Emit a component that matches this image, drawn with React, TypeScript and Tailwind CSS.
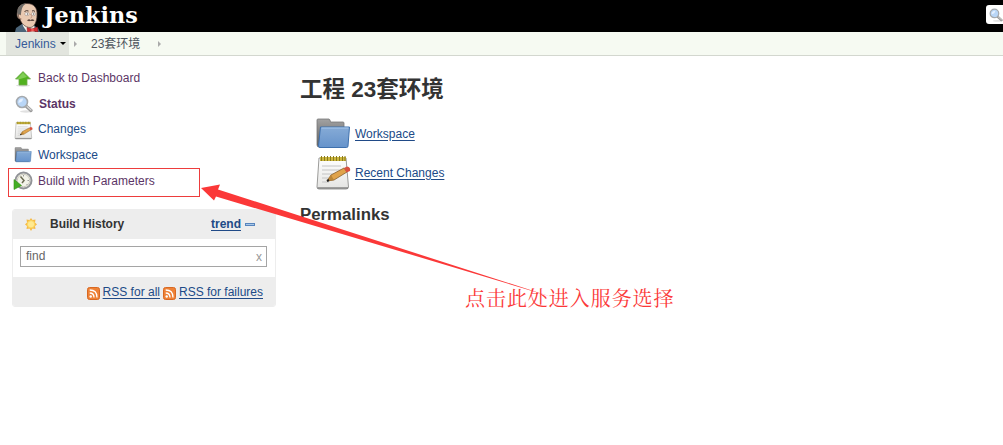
import type { ReactNode } from "react";

type IconProps = { className?: string };

function Butler() {
  return (
    <svg className="h-8 w-[30px] shrink-0" viewBox="0 0 30 32">
      <path d="M0 32 L1 28 L7 24 L18 25 L23 28 L25 32Z" fill="#4b6478" />
      <path d="M7 21 L8 26 L12 32 L20 32 L19 24Z" fill="#f4f1e9" />
      <path d="M2.500 12 C2.500 6 7 3.500 12 3.500 C19 3.500 22.500 8 22 15 C22 22 19 27.500 15 27.500 C10 27.500 6 23 5 19 C2 19 1.500 14 2.500 12Z" fill="#e9c9b1" stroke="#4b3a34" strokeWidth=".7" />
      <path d="M2.500 14 C1.500 8 5 4 11 3.600 C7 6 6.500 10 6 14 L5 18 L3.500 18Z" fill="#6d6a66" />
      <path d="M6 15 q-3 -2 -2.500 1 q0 3 3 3" fill="#e9c9b1" stroke="#79513f" strokeWidth=".6" />
      <ellipse cx="12" cy="14" rx="2.200" ry="1.700" fill="#fff" stroke="#8d7a6e" strokeWidth=".5" />
      <ellipse cx="18.500" cy="14" rx="1.900" ry="1.700" fill="#fff" stroke="#8d7a6e" strokeWidth=".5" />
      <path d="M11.800 14h1.200M18 14h1.200M9.500 11.500q2-1.500 4-.5M17 11q2-1 3 .5" fill="none" stroke="#43352f" />
      <path d="M12 20.500 q2-2 3.500-.5 q2-1.500 4 .5 q-2 1-4 .3 q-1.500 1-3.500-.3Z" fill="#5f4a42" />
      <path d="M15.500 14 q2.500 3.500 0 4" fill="none" stroke="#bb8973" strokeWidth=".8" />
      <path d="M12 27.500 L17 29 L22.500 27 L23 32 L17.500 31 L12.500 32Z" fill="#d22c30" stroke="#7b1719" strokeWidth=".5" />
      <circle cx="17.500" cy="30" r="1.400" fill="#ef5c58" />
    </svg>
  );
}

function UpArrow({ className }: IconProps) {
  return (
    <svg className={className} viewBox="0 0 18 18">
      <ellipse cx="9" cy="16.500" rx="7" ry="1.200" fill="#ddd" />
      <path d="M9 2.500 L16.500 10 H13 V16 H5 V10 H1.500Z" fill="#51b11f" stroke="#71aa4f" strokeWidth=".8" />
      <path d="M9 3.500 L13 8 L6 10 H3Z" fill="#80ce55" />
    </svg>
  );
}

function Magnifier({ className }: IconProps) {
  return (
    <svg className={className} viewBox="0 0 18 18">
      <ellipse cx="11" cy="16.500" rx="6" ry="1.200" fill="#e1e1e1" />
      <path d="M11 11 L16 15.500" stroke="#999" strokeWidth="3.200" strokeLinecap="round" />
      <path d="M12 11.500 L16 15" stroke="#d8d8d8" strokeWidth="1.200" strokeLinecap="round" />
      <circle cx="7" cy="7" r="5.500" fill="#b9d6f7" stroke="#a5a9ad" strokeWidth="1.600" />
      <path d="M3.500 7 Q4 3.500 8 3.500 Q8 7 3.500 8Z" fill="#e4f0ff" />
    </svg>
  );
}

function Notepad({ className }: IconProps) {
  return (
    <svg className={className} viewBox="0 0 36 36">
      <defs>
        <linearGradient id="paper" x1="0" y1="0" x2="0" y2="1">
          <stop offset="0" stopColor="#fff" />
          <stop offset="1" stopColor="#e4e4e2" />
        </linearGradient>
      </defs>
      <path d="M4 3 H31 L33.500 32 Q33.500 34 31 34 H4 Q2 34 2 32Z" fill="url(#paper)" stroke="#9b9b99" />
      <path d="M2.500 33 H33" stroke="#777" strokeWidth="1.300" />
      <path d="M5 4 H31" stroke="#cdb83c" strokeWidth="4" />
      <path d="M6.500 1v5M9.500 1v5M12.500 1v5M15.500 1v5M18.500 1v5M21.500 1v5M24.500 1v5M27.500 1v5M30 1v5" stroke="#8a7a20" strokeWidth="1" />
      <path d="M7 11h19M7 15h20M7 19h16M7 23h10M7 27h7" stroke="#c4c4c4" />
      <path d="M12 26 L16 20 L29 13 L32 17 L19 25Z" fill="#e0a34b" stroke="#86602e" strokeWidth=".8" />
      <path d="M12 26 L16 20 L19 25Z" fill="#b98538" />
      <path d="M29 13 L32 11.500 Q36 12 35 16 L31.500 17.500Z" fill="#d9503f" />
      <path d="M12 26l2-1" stroke="#222" strokeWidth="2" />
    </svg>
  );
}

function Folder({ className }: IconProps) {
  return (
    <svg className={className} viewBox="0 0 36 32">
      <defs>
        <linearGradient id="folderFront" x1="0" y1="0" x2="0" y2="1">
          <stop offset="0" stopColor="#86abd6" />
          <stop offset="1" stopColor="#6693cb" />
        </linearGradient>
        <linearGradient id="folderBack" x1="0" y1="0" x2="0" y2="1">
          <stop offset="0" stopColor="#a2a2a2" />
          <stop offset="1" stopColor="#5c5c5c" />
        </linearGradient>
      </defs>
      <path d="M2 2 Q2 1 3 1 H14 Q15 1 15.500 4 H28 Q29 4 29 5 V29 H4 Q2 29 2 27Z" fill="url(#folderBack)" stroke="#777" strokeWidth=".8" />
      <path d="M5.500 9 H34.500 L33 28 Q33 29.500 31.500 29.500 H5 Q3.500 29.500 3.500 28Z" fill="url(#folderFront)" stroke="#3e70ad" />
      <path d="M6.500 10 H33.500" stroke="#a9c8eb" />
    </svg>
  );
}

function BuildClock({ className }: IconProps) {
  return (
    <svg className={className} viewBox="0 0 20 20">
      <circle cx="10.500" cy="9.500" r="8" fill="#f3f3e9" stroke="#919397" strokeWidth="2" />
      <circle cx="10.500" cy="9.500" r="6.200" fill="none" stroke="#c9c9bd" />
      <path d="M10.500 4v1.500M16 9.500h-1.500M13.500 13l1 1" stroke="#999" />
      <path d="M7.500 5.500 L11 9.500 L9 12" fill="none" stroke="#6b6b52" strokeWidth="1.500" />
      <path d="M1 8.500 L8.500 14.500 L1 18.500Z" fill="#43ae24" stroke="#359016" strokeWidth=".6" />
    </svg>
  );
}

function Sun() {
  return (
    <svg className="size-4 shrink-0" viewBox="0 0 16 16">
      <path d="M8 2 L9.500 4 L12.500 3.500 L12 6.500 L14 8.500 L12 10 L12.500 13 L9.500 12.500 L8 15 L6.500 12.500 L3.500 13 L4 10 L2 8.500 L4 6.500 L3.500 3.500 L6.500 4Z" fill="#f6ba45" />
      <circle cx="8" cy="8.300" r="3.700" fill="#ffe990" stroke="#fbd45c" />
    </svg>
  );
}

function Rss() {
  return (
    <svg className="mt-0.5 size-[13px] shrink-0" viewBox="0 0 13 13">
      <rect x=".5" y=".5" width="12" height="12" rx="2" fill="#ee8136" stroke="#d86822" />
      <circle cx="3.700" cy="9.500" r="1.200" fill="#fff" />
      <path d="M2.700 6 Q7 6 7 10.500 M2.700 3 Q10 3 10 10.500" fill="none" stroke="#fff" strokeWidth="1.300" />
    </svg>
  );
}

function Task({ icon, children, className = "text-[#204a87]" }: { icon: ReactNode; children: ReactNode; className?: string }) {
  return (
    <a className={`flex h-[25.750px] items-center ${className}`}>
      <span className="flex w-[25px] shrink-0 items-center">{icon}</span>
      {children}
    </a>
  );
}

export default function App() {
  return (
    <div className="relative h-[445px] overflow-hidden bg-white font-['Liberation_Sans','Noto_Sans_CJK_SC',sans-serif] text-xs text-[#333]">
      <header className="flex h-8 items-start justify-between bg-black pl-[15px]">
        <div className="flex">
          <Butler />
          <span className="-ml-px origin-left scale-x-[1.015] font-['DejaVu_Serif',serif] text-[22px] leading-[30px] font-bold text-white">Jenkins</span>
        </div>
        <div className="mt-[5px] flex h-[19px] w-[17px] items-center overflow-hidden rounded-l-[3px] bg-white pl-[3px]">
          <Magnifier className="size-[14px] shrink-0" />
        </div>
      </header>

      <nav className="flex h-6 items-stretch border-b border-[#d3d7cf] bg-[#f6faf2] pl-1.5 text-[#4d545d]">
        <div className="flex w-[63px] items-center bg-[#e2e5de] pl-[9px] text-[#365a99]">
          Jenkins
          <span className="ml-1 border-x-[3px] border-t-[3px] border-x-transparent border-t-black" />
        </div>
        <span className="mt-[9px] ml-[5px] h-0 border-y-[3px] border-l-[3px] border-y-transparent border-l-[#aaa]" />
        <span className="ml-[14px] flex w-[67px] items-center">23套环境</span>
        <span className="mt-[9px] h-0 border-y-[3px] border-l-[3px] border-y-transparent border-l-[#aaa]" />
      </nav>

      <div className="flex">
        <aside className="w-[276px] shrink-0 pt-[9px] pl-3">
          <div className="pl-px">
            <Task className="text-[#5c3566]" icon={<UpArrow className="ml-px size-[18px]" />}>Back to Dashboard</Task>
            <Task className="font-bold text-[#5c3566]" icon={<Magnifier className="ml-0.5 size-[18px]" />}><span className="ml-px">Status</span></Task>
            <Task icon={<Notepad className="mt-0.5 ml-px size-[19px]" />}>Changes</Task>
            <Task icon={<Folder className="ml-px h-4 w-[18px]" />}>Workspace</Task>
            <Task className="text-[#5c3566]" icon={<BuildClock className="size-5" />}>Build with Parameters</Task>
          </div>

          <section className="mt-[15px] h-[98px] w-[264px] overflow-hidden rounded-[3px] border border-[#ededed] bg-white">
            <div className="flex h-[29px] items-center bg-[#ededed] pr-5 pl-[10px] font-bold">
              <Sun />
              <span className="ml-[11px] tracking-[-0.040px]">Build History</span>
              <a className="ml-auto text-[#204a87] underline underline-offset-2">trend</a>
              <span className="ml-1 h-[3px] w-[10px] border border-[#5885bd] bg-[#a9c8e8]" />
            </div>
            <div className="h-[38px] pt-[7px] pr-2 pl-[7px]">
              <div className="flex h-[21px] items-center justify-between border border-[#a5a5a5] px-[5px] text-[#666]">
                <span className="-mt-px">find</span>
                <span className="-mr-px mt-px text-[#999]">x</span>
              </div>
            </div>
            <div className="flex h-[31px] items-center justify-end gap-[3px] bg-[#ededed] pr-3 text-[#204a87]">
              <Rss />
              <a className="underline underline-offset-2">RSS for all</a>
              <Rss />
              <a className="underline underline-offset-2">RSS for failures</a>
            </div>
          </section>
        </aside>

        <main className="pt-[18px] pl-6">
          <h1 className="h-[32px] text-[22.500px] leading-[32px] font-bold whitespace-nowrap">工程 23套环境</h1>
          <div className="mt-2 ml-[15px] text-[#204a87]">
            <div className="flex h-[39px] items-center">
              <Folder className="h-8 w-9" />
              <a className="ml-1 underline underline-offset-2">Workspace</a>
            </div>
            <div className="flex h-[39px] items-center">
              <Notepad className="size-9" />
              <a className="ml-1 underline underline-offset-2">Recent Changes</a>
            </div>
          </div>
          <h2 className="mt-3 text-[16.800px] leading-[22px] font-bold">Permalinks</h2>
        </main>
      </div>

      <div className="absolute top-[168px] left-[8px] h-[29px] w-[192px] border border-[#ed3d3d]" />
      <svg className="absolute top-0 left-0 h-[445px] w-[1003px]" viewBox="0 0 1003 445">
        <path d="M201 188 L220 184.500 L218 189.500 L440 261 L552 297 L440 263.200 L216 196.500 L214 200.500Z" fill="#fb3838" />
      </svg>
      <span className="absolute top-[283px] left-[465px] font-['Noto_Serif_CJK_SC','Noto_Sans_CJK_SC',serif] text-[20px] leading-[29px] font-normal tracking-[0.950px] whitespace-nowrap text-[#fb3838]">点击此处进入服务选择</span>
    </div>
  );
}
